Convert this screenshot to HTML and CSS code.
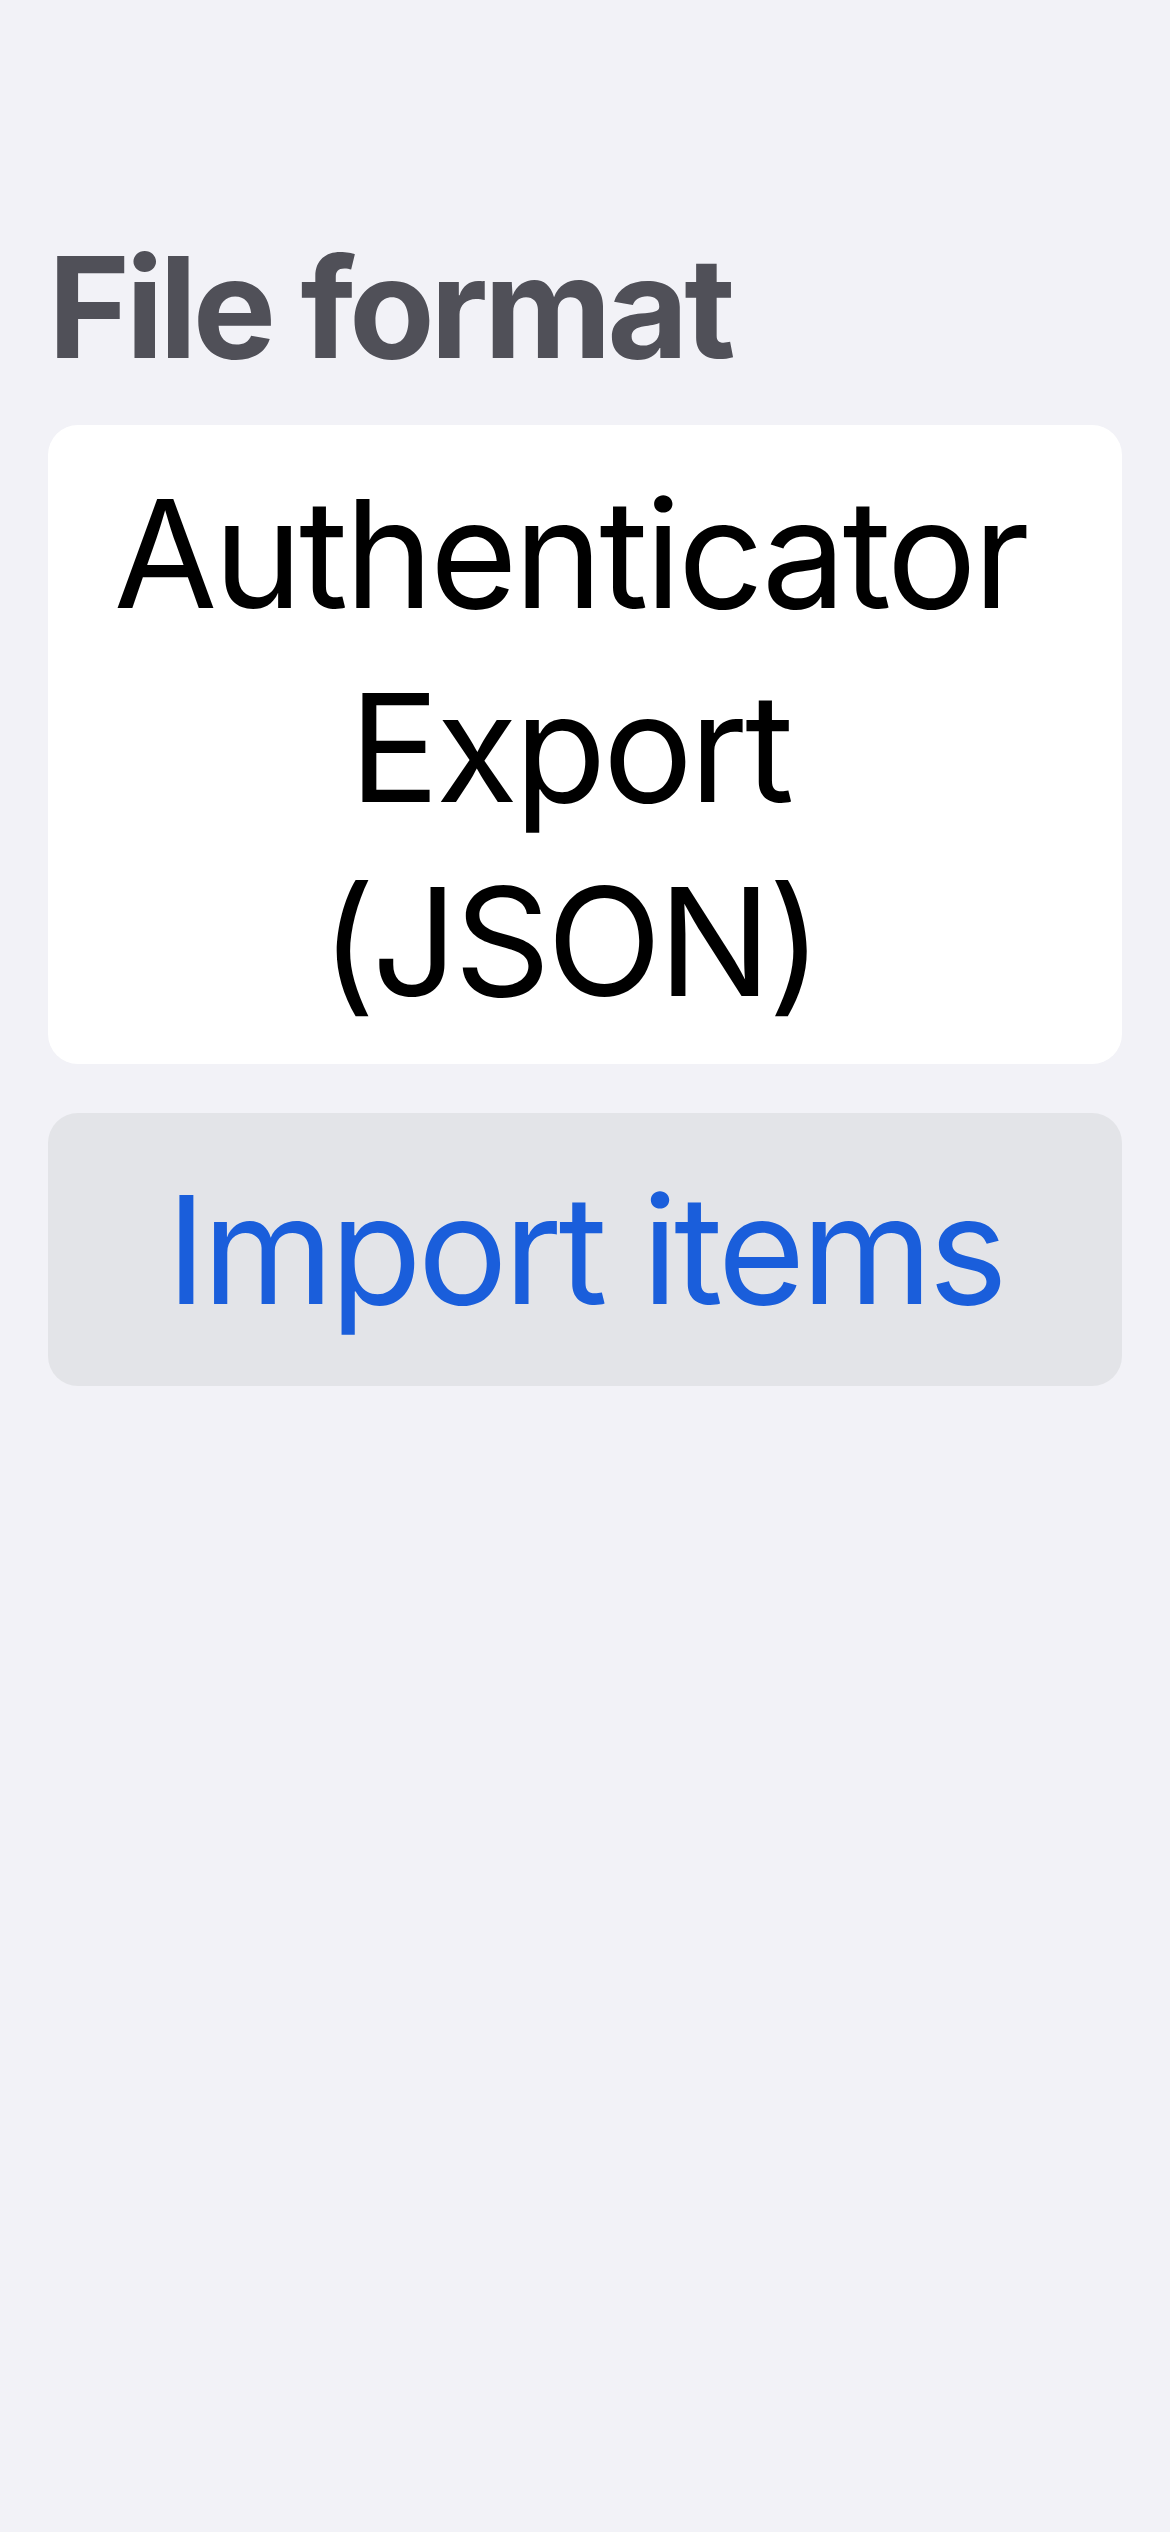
FILE: index.html
```html
<!DOCTYPE html>
<html lang="en">
<head>
<meta charset="utf-8">
<title>File format</title>
<link rel="stylesheet" href="styles.css">
</head>
<body>
<main class="page">
  <h1 class="section-title">File format</h1>
  <div class="picker-card">
    <div class="picker-value"><span class="line">Authenticator</span> <span class="line">Export</span> <span class="line">(JSON)</span></div>
  </div>
  <button class="import-button" type="button">Import items</button>
</main>
</body>
</html>
```
FILE: styles.css
```css
html, body {
  margin: 0;
  padding: 0;
  background: #F2F2F7;
}
body {
  width: 1170px;
  min-height: 2532px;
  font-family: Inter, "Noto Sans", "Liberation Sans", sans-serif;
}
.page {
  display: flex;
  flex-direction: column;
  padding: 221px 48px 0 48px;
}
.section-title {
  margin: 0 0 32px 0;
  font-size: 140px;
  line-height: 172px;
  font-weight: 700;
  color: #505058;
  letter-spacing: -4.4px;
}
.picker-card {
  background: #FFFFFF;
  border-radius: 30px;
  padding: 32px 62px 25px 32px;
}
.picker-value {
  display: flex;
  flex-direction: column;
  align-items: center;
  text-align: center;
  font-size: 150px;
  line-height: 194px;
  font-weight: 400;
  color: #000000;
  letter-spacing: -3.4px;
}
.line {
  display: block;
  white-space: nowrap;
}
.import-button {
  margin-top: 49px;
  height: 273px;
  border: 0;
  border-radius: 30px;
  background: #E3E4E8;
  color: #1A5EDB;
  font-family: Inter, "Noto Sans", "Liberation Sans", sans-serif;
  font-size: 150px;
  line-height: 194px;
  font-weight: 400;
  letter-spacing: -4px;
  padding: 0;
  display: flex;
  align-items: center;
  justify-content: center;
}
```
